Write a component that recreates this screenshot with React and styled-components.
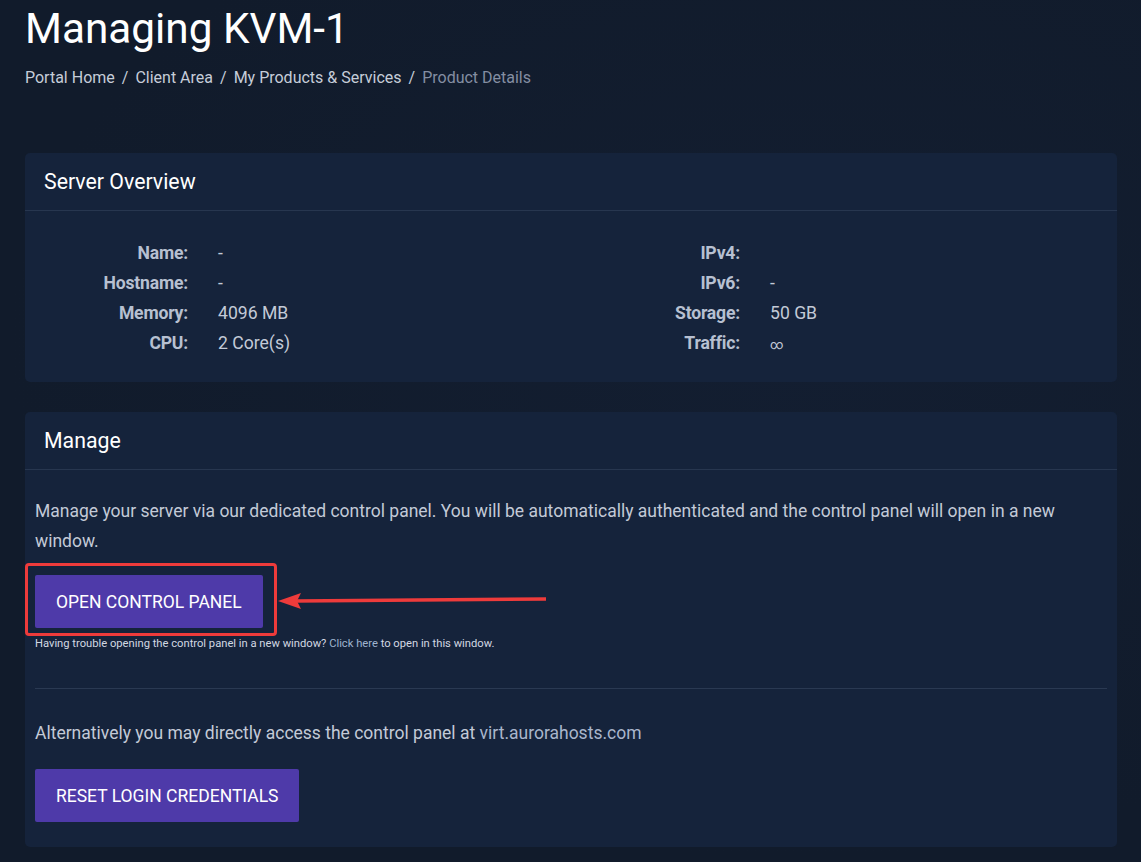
import React from "react";
import styled, { createGlobalStyle } from "styled-components";

const Global = createGlobalStyle`
  html, body { margin: 0; padding: 0; }
  body {
    background: #111b2b;
    font-family: Roboto, "Liberation Sans", Arial, sans-serif;
    color: #c3cad7;
    min-height: 862px;
  }
  * { box-sizing: border-box; }
`;

const Page = styled.div`
  padding: 0 24px 0 25px;
  background: radial-gradient(ellipse at 70% 40%, #131e31 0%, #111b2b 70%);
  min-height: 862px;
`;

const Title = styled.h1`
  margin: 0;
  padding-top: 4px;
  font-size: 42.3px;
  font-weight: 400;
  line-height: 50px;
  color: #ffffff;
`;

const Crumbs = styled.nav`
  display: flex;
  align-items: center;
  margin-top: 14px;
  font-size: 16px;
  line-height: 20px;
  color: #c6cdd9;
`;

const Crumb = styled.span`
  color: ${(p) => (p.$active ? "#848ea2" : "#c6cdd9")};
`;

const Sep = styled.span`
  padding: 0 7px;
  color: #c6cdd9;
`;

const Card = styled.section`
  background: #15233b;
  border-radius: 5px;
  margin-top: ${(p) => p.$mt}px;
  overflow: hidden;
`;

const CardHeader = styled.header`
  height: 58px;
  padding: 0 19px;
  display: flex;
  align-items: center;
  font-size: 21.3px;
  color: #ffffff;
  border-bottom: 1px solid #27364f;
`;

const OverviewBody = styled.div`
  display: grid;
  grid-template-columns: 552px 552px;
  padding: 27px 20px 24px;
`;

const DetailList = styled.dl`
  margin: 0;
  display: grid;
  grid-template-columns: 143px 1fr;
  grid-auto-rows: 30px;
  column-gap: 30px;
  font-size: 17.6px;
  line-height: 30px;
`;

const Label = styled.dt`
  text-align: right;
  font-weight: 700;
  color: #b7c0d1;
  letter-spacing: -0.2px;
`;

const Value = styled.dd`
  margin: 0;
  color: #c3cad7;
`;

const Infinity = styled.span`
  font-size: 13px;
  line-height: 1;
`;

const ManageBody = styled.div`
  padding: 26px 10px 25px;
`;

const Text = styled.p`
  margin: 0;
  font-size: 17.5px;
  line-height: 30px;
  color: #c3cad7;
`;

const Link = styled.span`
  color: ${(p) => p.$c || "#a9b6cc"};
`;

const Button = styled.button`
  display: inline-flex;
  align-items: center;
  justify-content: center;
  height: 53px;
  padding: 0 21px;
  border: none;
  border-radius: 2px;
  background: #4e3aa9;
  color: #ffffff;
  font-family: Roboto, "Liberation Sans", Arial, sans-serif;
  font-size: 17.5px;
  text-transform: uppercase;
  cursor: pointer;
  margin-top: ${(p) => p.$mt || 0}px;
`;

const Small = styled.p`
  margin: 8px 0 0;
  font-size: 11.2px;
  line-height: 16px;
  color: #d2d8e2;
`;

const Divider = styled.hr`
  margin: 36px 0 29px;
  border: none;
  border-top: 1px solid #2a3952;
`;

const ButtonWrap = styled.div`
  position: relative;
  margin-top: 19px;
  display: flex;
`;

const Overlay = styled.div`
  position: absolute;
  left: -10px;
  top: -12px;
  pointer-events: none;
`;

const Highlight = styled.div`
  width: 252px;
  height: 73px;
  border: 3px solid #ee3b3b;
  border-radius: 4px;
`;

const Arrow = styled.svg`
  position: absolute;
  left: 252px;
  top: 24px;
  overflow: visible;
`;

const overview = [
  ["Name:", "-"],
  ["Hostname:", "-"],
  ["Memory:", "4096 MB"],
  ["CPU:", "2 Core(s)"],
];
const overview2 = [
  ["IPv4:", ""],
  ["IPv6:", "-"],
  ["Storage:", "50 GB"],
  ["Traffic:", <Infinity key="inf">∞</Infinity>],
];

function Details({ items }) {
  return (
    <DetailList>
      {items.map(([k, v]) => (
        <React.Fragment key={k}>
          <Label>{k}</Label>
          <Value>{v || "\u00a0"}</Value>
        </React.Fragment>
      ))}
    </DetailList>
  );
}

export default function App() {
  return (
    <>
      <Global />
      <Page>
        <Title>Managing KVM-1</Title>
        <Crumbs>
          <Crumb>Portal Home</Crumb>
          <Sep>/</Sep>
          <Crumb>Client Area</Crumb>
          <Sep>/</Sep>
          <Crumb>My Products &amp; Services</Crumb>
          <Sep>/</Sep>
          <Crumb $active>Product Details</Crumb>
        </Crumbs>

        <Card $mt={65}>
          <CardHeader>Server Overview</CardHeader>
          <OverviewBody>
            <Details items={overview} />
            <Details items={overview2} />
          </OverviewBody>
        </Card>

        <Card $mt={30}>
          <CardHeader>Manage</CardHeader>
          <ManageBody>
            <Text>
              Manage your server via our dedicated control panel. You will be
              automatically authenticated and the control panel will open in a
              new window.
            </Text>
            <ButtonWrap>
              <Button>Open Control Panel</Button>
              <Overlay>
                <Highlight />
                <Arrow width="270" height="28" viewBox="0 0 270 28">
                  <line x1="19" y1="14" x2="269" y2="12" stroke="#ee3b3b" strokeWidth="3.5" />
                  <polygon points="1,14 24,6 20,14 24,22" fill="#ee3b3b" />
                </Arrow>
              </Overlay>
            </ButtonWrap>
            <Small>
              Having trouble opening the control panel in a new window?{" "}
              <Link $c="#9fb3cf">Click here</Link> to open in this window.
            </Small>
            <Divider />
            <Text>
              Alternatively you may directly access the control panel at{" "}
              <Link>virt.aurorahosts.com</Link>
            </Text>
            <Button $mt={21}>Reset Login Credentials</Button>
          </ManageBody>
        </Card>
      </Page>
    </>
  );
}
